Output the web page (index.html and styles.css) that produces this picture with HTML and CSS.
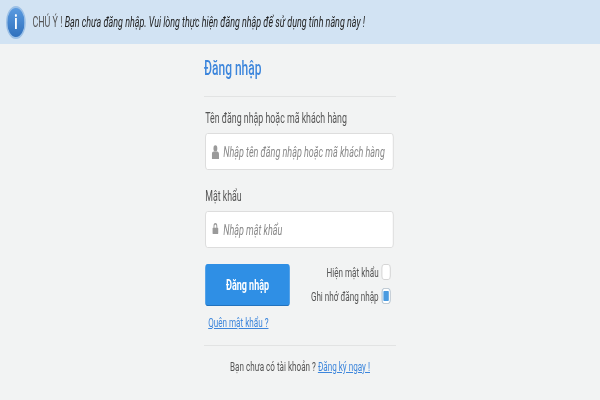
FILE: index.html
```html
<!DOCTYPE html>
<html lang="vi">
<head>
  <meta charset="UTF-8" />
  <meta name="viewport" content="width=device-width, initial-scale=1.0" />
  <title>Đăng nhập</title>
  <link rel="stylesheet" href="styles.css">
</head>
<body>
  <div class="frame">
    <div class="page">
      <div class="alert">
        <div class="alert-icon">i</div>
        <p class="alert-text">CHÚ Ý ! <em>Bạn chưa đăng nhập. Vui lòng thực hiện đăng nhập để sử dụng tính năng này !</em></p>
      </div>

      <div class="login">
        <h1>Đăng nhập</h1>
        <form class="login-form">
          <label class="field-label" for="user">Tên đăng nhập hoặc mã khách hàng</label>
          <div class="field">
            <svg class="field-icon" viewBox="0 0 12 14"><circle cx="6" cy="3.4" r="3.2"/><path d="M0 14V9.600C0 7.800 1.300 6.600 3 6.600h6c1.700 0 3 1.200 3 3V14z"/></svg>
            <input id="user" type="text" placeholder="Nhập tên đăng nhập hoặc mã khách hàng" />
          </div>

          <label class="field-label" for="pass">Mật khẩu</label>
          <div class="field">
            <svg class="field-icon lock" viewBox="0 0 12 14"><path d="M2 6V4a4 4 0 0 1 8 0v2h1a1 1 0 0 1 1 1v6a1 1 0 0 1-1 1H1a1 1 0 0 1-1-1V7a1 1 0 0 1 1-1zm2 0h4V4a2 2 0 0 0-4 0z"/></svg>
            <input id="pass" type="text" placeholder="Nhập mật khẩu" />
          </div>

          <div class="actions">
            <button type="button" class="submit">Đăng nhập</button>
            <div class="options">
              <label class="option">Hiện mật khẩu <input type="checkbox" /></label>
              <label class="option">Ghi nhớ đăng nhập <input type="checkbox" checked /></label>
            </div>
          </div>
          <a class="forgot" href="#">Quên mật khẩu ?</a>
        </form>
        <p class="register">Bạn chưa có tài khoản ? <a href="#">Đăng ký ngay !</a></p>
      </div>
    </div>
  </div>
</body>
</html>
```

FILE: styles.css
```css
html,
body {
  margin: 0;
  height: 100%;
  overflow: hidden;
  background: #f2f3f3;
}
.frame {
  width: 600px;
  height: 400px;
  overflow: hidden;
}
/* the shot is a 1000px wide page squeezed to 600 */
.page {
  width: 1000px;
  height: 400px;
  font-family: Roboto, Arial, sans-serif;
  font-size: 15px;
  color: #555;
  transform: scaleX(0.6);
  transform-origin: left top;
  filter: blur(0.5px);
}
.alert {
  display: flex;
  align-items: center;
  gap: 11px;
  height: 44px;
  padding: 0 10px;
  background: #d2e3f3;
}
.alert-icon {
  box-sizing: border-box;
  width: 33px;
  height: 33px;
  border-radius: 50%;
  border: 2px solid #9cc0e6;
  background: linear-gradient(#5b9be0, #2f70bd);
  color: #fff;
  font-size: 21px;
  font-weight: bold;
  line-height: 29px;
  text-align: center;
}
.alert-text {
  margin: 0;
  font-size: 14.9px;
  color: #555;
}
.alert-text em {
  color: #222;
}
.login {
  width: 320px;
  margin: 0 auto;
}
h1 {
  margin: 0;
  padding: 13px 0 16px;
  font-size: 20px;
  line-height: 23px;
  font-weight: 500;
  color: #3d86dc;
  border-bottom: 1px solid #e2e3e3;
}
.login-form {
  padding: 0 2px;
}
.field-label {
  display: block;
  margin: 18px 0 7px;
  font-size: 14.7px;
  line-height: 16px;
}
.field-label:first-child {
  margin-top: 13px;
}
.field {
  display: flex;
  align-items: center;
  gap: 7px;
  box-sizing: border-box;
  width: 314px;
  height: 37px;
  padding: 0 10px;
  background: #fff;
  border: 1px solid #d5d6d6;
  border-radius: 4px;
}
.field-icon {
  flex: none;
  width: 12px;
  height: 14px;
  fill: #9a9a9a;
}
.field-icon.lock {
  height: 11px;
  margin-top: -3px;
}
.field input {
  flex: 1;
  min-width: 0;
  padding: 0;
  border: none;
  outline: none;
  background: none;
  font: inherit;
}
.field input::placeholder {
  font-style: italic;
  color: #888;
}
.actions {
  display: flex;
  justify-content: space-between;
  margin-top: 16px;
}
.submit {
  width: 141px;
  height: 42px;
  padding: 0;
  border: none;
  border-bottom: 1px solid #2272bd;
  border-radius: 4px;
  background: #2f8fe5;
  color: #fff;
  font: bold 15px Roboto, Arial, sans-serif;
}
.options {
  display: flex;
  flex-direction: column;
  gap: 8px;
  padding-right: 7px;
}
.option {
  display: flex;
  align-items: center;
  justify-content: flex-end;
  gap: 5px;
  height: 16px;
  font-size: 13.5px;
}
.option input {
  appearance: none;
  box-sizing: border-box;
  width: 15px;
  height: 16px;
  margin: 0;
  border: 1px solid #ccc;
  border-radius: 4px;
  background: #fff;
}
.option input:checked {
  background: #4a9be0;
  box-shadow: inset 0 0 0 2px #fff;
}
.forgot {
  display: inline-block;
  margin: 7px 0 0 5px;
  font-size: 13.5px;
  line-height: 18px;
}
a {
  color: #3d86dc;
}
.register {
  margin: 14px 0 0;
  padding-top: 11px;
  border-top: 1px solid #e2e3e3;
  font-size: 13.5px;
  line-height: 18px;
  text-align: center;
}
```
